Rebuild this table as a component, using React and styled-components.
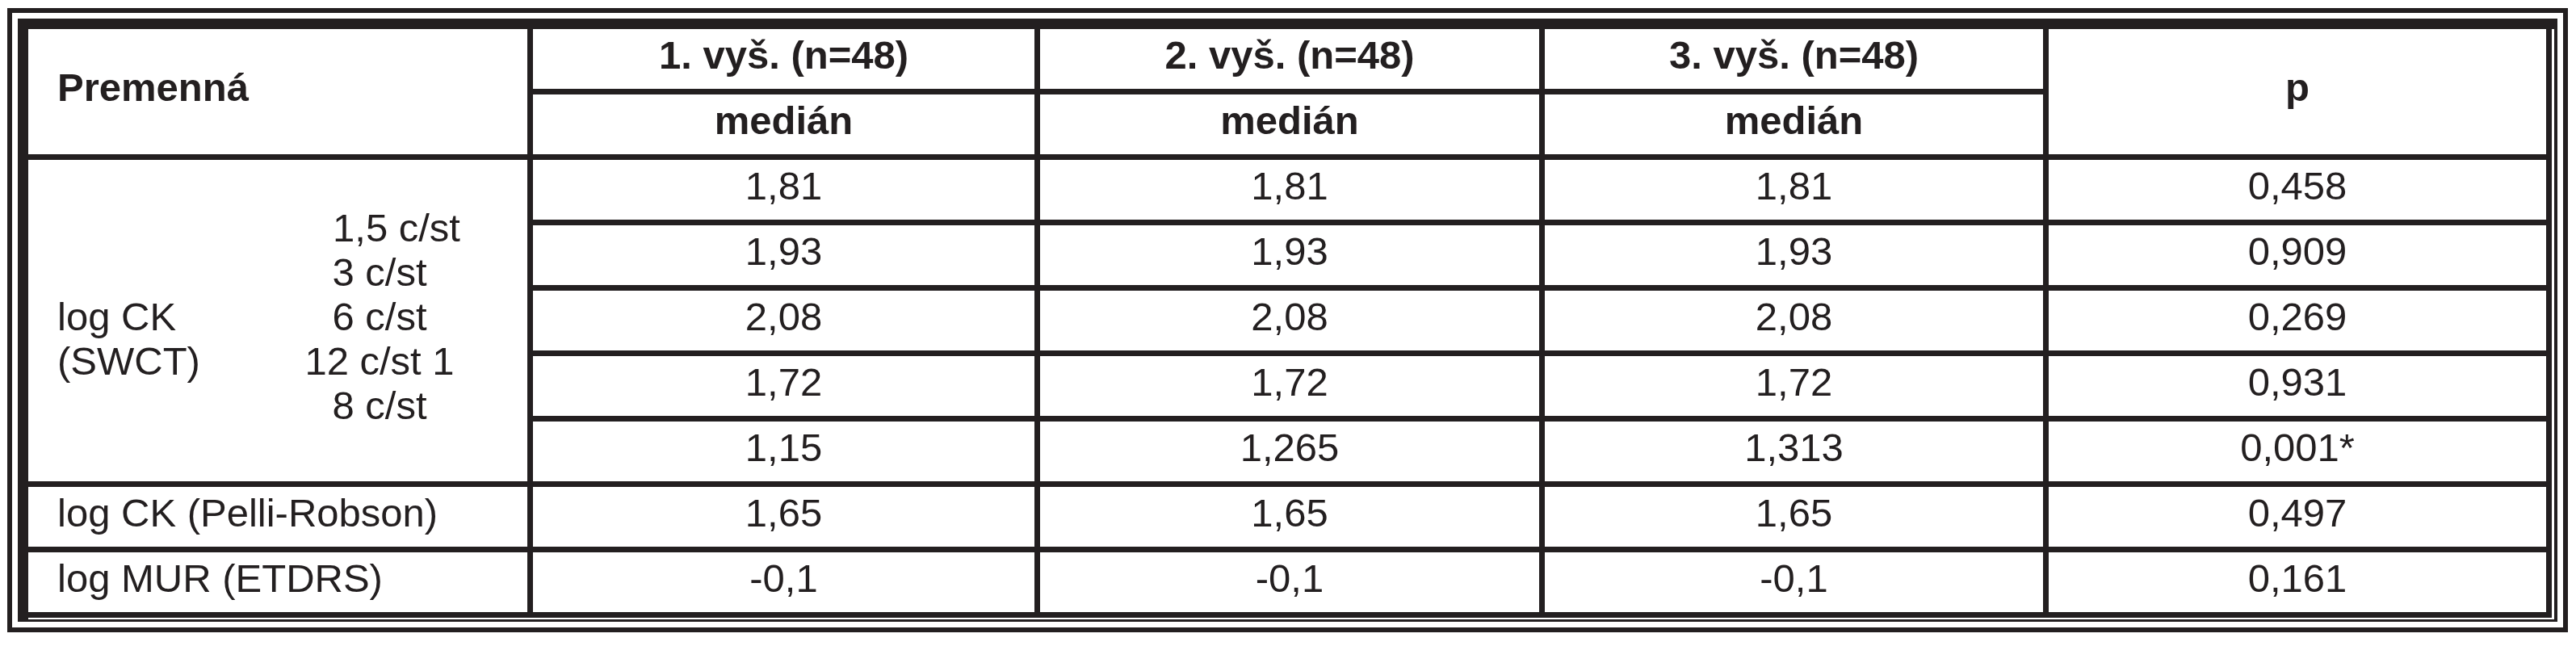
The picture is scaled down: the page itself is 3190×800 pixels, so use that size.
import React from "react";
import styled, { createGlobalStyle } from "styled-components";

const INK = "#231f20";

const Global = createGlobalStyle`
  html, body { margin: 0; padding: 0; background: #ffffff; }
  body { font-family: "Liberation Sans", Arial, sans-serif; color: ${INK}; }
  *, *::before, *::after { box-sizing: border-box; }
`;

const Page = styled.div`
  padding: 10px 0 0 9px;
`;

const Frame = styled.div`
  width: 3171px;
  border: 6px solid ${INK};
  padding: 7px;
`;

const Sheet = styled.div`
  border-top: 13px solid ${INK};
  border-left: 13px solid ${INK};
  border-right: 4px solid ${INK};
  border-bottom: 3px solid ${INK};
  padding-right: 3px;
  padding-bottom: 2px;
`;

const Table = styled.div`
  display: grid;
  grid-template-columns: 625px 628px 625px 624px 623px;
  grid-auto-rows: 81px;
  font-size: 49px;
  line-height: 1.15;
`;

const Cell = styled.div`
  grid-row: span ${(p) => p.$span || 1};
  display: flex;
  align-items: center;
  justify-content: ${(p) => (p.$left ? "flex-start" : "center")};
  padding: 0 0 10px ${(p) => (p.$left ? "36px" : "0")};
  font-weight: ${(p) => (p.$bold ? 700 : 400)};
  border-right: 7px solid ${INK};
  border-bottom: 7px solid ${INK};
  white-space: nowrap;
`;

const LabelCell = styled.div`
  grid-row: span 5;
  display: grid;
  grid-template-columns: 290px 218px;
  grid-template-rows: repeat(5, 55px);
  align-content: center;
  padding: 0 0 10px 36px;
  line-height: 55px;
  border-right: 7px solid ${INK};
  border-bottom: 7px solid ${INK};
  white-space: nowrap;
`;

const MainLabel = styled.span`
  grid-column: 1;
  grid-row: ${(p) => p.$row};
`;

const SubLabel = styled.span`
  grid-column: 2;
  grid-row: ${(p) => p.$row};
  text-align: center;
  padding-left: ${(p) => (p.$shift ? "42px" : "0")};
`;

const rows = [
  ["1,81", "1,81", "1,81", "0,458"],
  ["1,93", "1,93", "1,93", "0,909"],
  ["2,08", "2,08", "2,08", "0,269"],
  ["1,72", "1,72", "1,72", "0,931"],
  ["1,15", "1,265", "1,313", "0,001*"],
];

const extra = [
  { label: "log CK (Pelli-Robson)", values: ["1,65", "1,65", "1,65", "0,497"] },
  { label: "log MUR (ETDRS)", values: ["-0,1", "-0,1", "-0,1", "0,161"] },
];

const subLabels = ["1,5 c/st", "3 c/st", "6 c/st", "12 c/st 1", "8 c/st"];

export default function App() {
  return (
    <>
      <Global />
      <Page>
        <Frame>
          <Sheet>
            <Table>
              <Cell $span={2} $left $bold>Premenná</Cell>
              <Cell $bold>1. vyš. (n=48)</Cell>
              <Cell $bold>2. vyš. (n=48)</Cell>
              <Cell $bold>3. vyš. (n=48)</Cell>
              <Cell $span={2} $bold>p</Cell>
              <Cell $bold>medián</Cell>
              <Cell $bold>medián</Cell>
              <Cell $bold>medián</Cell>

              <LabelCell>
                <MainLabel $row={3}>log CK</MainLabel>
                <MainLabel $row={4}>(SWCT)</MainLabel>
                {subLabels.map((s, i) => (
                  <SubLabel key={s} $row={i + 1} $shift={i === 0}>
                    {s}
                  </SubLabel>
                ))}
              </LabelCell>
              {rows.map((r, i) =>
                r.map((v, j) => <Cell key={`r${i}-${j}`}>{v}</Cell>)
              )}

              {extra.map((e) => (
                <React.Fragment key={e.label}>
                  <Cell $left>{e.label}</Cell>
                  {e.values.map((v, j) => (
                    <Cell key={`${e.label}-${j}`}>{v}</Cell>
                  ))}
                </React.Fragment>
              ))}
            </Table>
          </Sheet>
        </Frame>
      </Page>
    </>
  );
}
